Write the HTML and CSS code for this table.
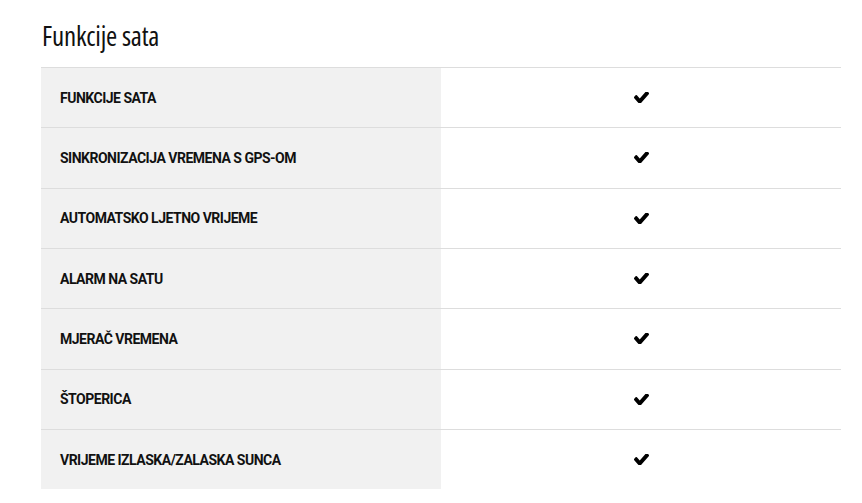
FILE: index.html
```html
<!DOCTYPE html>
<html>
<head>
<meta charset="utf-8">
<link rel="stylesheet" href="styles.css">
</head>
<body>
<div class="wrap">
  <h2 class="title">Funkcije sata</h2>
  <div class="table">
    <div class="row"><div class="label">FUNKCIJE SATA</div><div class="value"><svg class="check" viewBox="121 430 1550 1000" preserveAspectRatio="none"><path d="M1671 566q0 40-28 68l-724 724-136 136q-28 28-68 28t-68-28l-136-136-362-362q-28-28-28-68t28-68l136-136q28-28 68-28t68 28l294 295 656-657q28-28 68-28t68 28l136 136q28 28 28 68z"/></svg></div></div>
    <div class="row"><div class="label">SINKRONIZACIJA VREMENA S GPS-OM</div><div class="value"><svg class="check" viewBox="121 430 1550 1000" preserveAspectRatio="none"><path d="M1671 566q0 40-28 68l-724 724-136 136q-28 28-68 28t-68-28l-136-136-362-362q-28-28-28-68t28-68l136-136q28-28 68-28t68 28l294 295 656-657q28-28 68-28t68 28l136 136q28 28 28 68z"/></svg></div></div>
    <div class="row"><div class="label">AUTOMATSKO LJETNO VRIJEME</div><div class="value"><svg class="check" viewBox="121 430 1550 1000" preserveAspectRatio="none"><path d="M1671 566q0 40-28 68l-724 724-136 136q-28 28-68 28t-68-28l-136-136-362-362q-28-28-28-68t28-68l136-136q28-28 68-28t68 28l294 295 656-657q28-28 68-28t68 28l136 136q28 28 28 68z"/></svg></div></div>
    <div class="row"><div class="label">ALARM NA SATU</div><div class="value"><svg class="check" viewBox="121 430 1550 1000" preserveAspectRatio="none"><path d="M1671 566q0 40-28 68l-724 724-136 136q-28 28-68 28t-68-28l-136-136-362-362q-28-28-28-68t28-68l136-136q28-28 68-28t68 28l294 295 656-657q28-28 68-28t68 28l136 136q28 28 28 68z"/></svg></div></div>
    <div class="row"><div class="label">MJERAČ VREMENA</div><div class="value"><svg class="check" viewBox="121 430 1550 1000" preserveAspectRatio="none"><path d="M1671 566q0 40-28 68l-724 724-136 136q-28 28-68 28t-68-28l-136-136-362-362q-28-28-28-68t28-68l136-136q28-28 68-28t68 28l294 295 656-657q28-28 68-28t68 28l136 136q28 28 28 68z"/></svg></div></div>
    <div class="row"><div class="label">ŠTOPERICA</div><div class="value"><svg class="check" viewBox="121 430 1550 1000" preserveAspectRatio="none"><path d="M1671 566q0 40-28 68l-724 724-136 136q-28 28-68 28t-68-28l-136-136-362-362q-28-28-28-68t28-68l136-136q28-28 68-28t68 28l294 295 656-657q28-28 68-28t68 28l136 136q28 28 28 68z"/></svg></div></div>
    <div class="row"><div class="label">VRIJEME IZLASKA/ZALASKA SUNCA</div><div class="value"><svg class="check" viewBox="121 430 1550 1000" preserveAspectRatio="none"><path d="M1671 566q0 40-28 68l-724 724-136 136q-28 28-68 28t-68-28l-136-136-362-362q-28-28-28-68t28-68l136-136q28-28 68-28t68 28l294 295 656-657q28-28 68-28t68 28l136 136q28 28 28 68z"/></svg></div></div>
  </div>
</div>
</body>
</html>
```
FILE: styles.css
```css
html, body {
  margin: 0;
  padding: 0;
  background: #fff;
}
.wrap {
  padding: 19px 21px 0 41px;
}
.title {
  margin: 0 0 0 1px;
  height: 48px;
  font-family: "Open Sans", sans-serif;
  font-stretch: 75%;
  font-weight: 500;
  font-size: 27px;
  line-height: 34px;
  letter-spacing: -0.2px;
  color: #111;
}
.table {
  border-top: 1px solid #ddd;
}
.row {
  display: flex;
  height: 59.33px;
  border-bottom: 1px solid #ddd;
}
.row:last-child {
  border-bottom: none;
}
.label {
  width: 400px;
  box-sizing: border-box;
  background: #f1f1f1;
  padding-left: 19px;
  display: flex;
  align-items: center;
  font-family: Roboto, "Liberation Sans", sans-serif;
  font-weight: bold;
  font-size: 14px;
  letter-spacing: -0.5px;
  color: #111;
}
.value {
  flex: 1;
  display: flex;
  align-items: center;
  justify-content: center;
}
.check {
  width: 15px;
  height: 11px;
  fill: #000;
}
```
